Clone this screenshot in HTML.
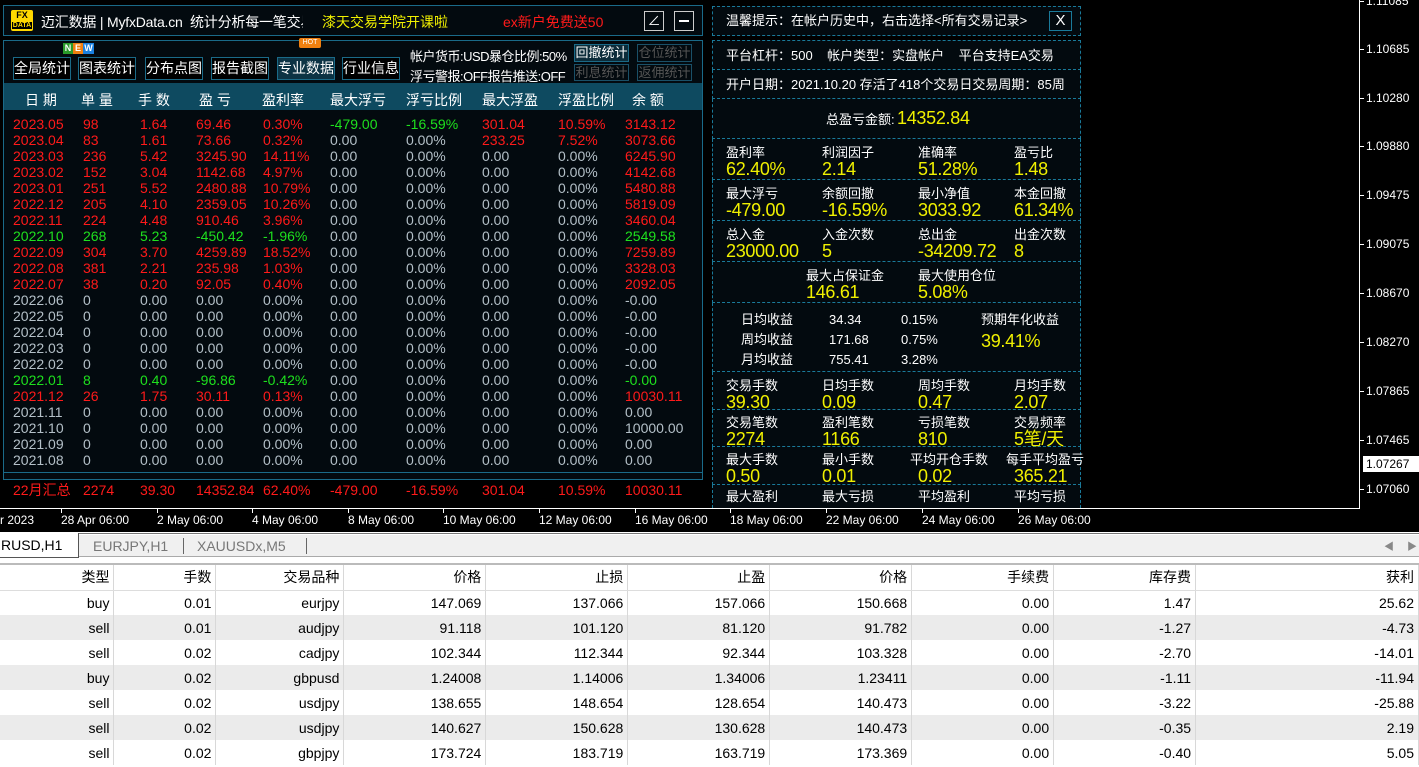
<!DOCTYPE html>
<html><head><meta charset="utf-8">
<style>
*{margin:0;padding:0;box-sizing:border-box}
body{width:1419px;height:767px;overflow:hidden;background:#000;position:relative;font-family:"Liberation Sans","Noto Sans CJK SC",sans-serif;color:#fff}
.a{position:absolute;white-space:nowrap}
.box{position:absolute;border:1px solid #1a6a88;background:#030a0f}
.btn{position:absolute;top:57px;height:23px;border:1px solid #1a6a88;background:#000;color:#fff;font-size:14px;line-height:21px;text-align:center}
.row{position:absolute;left:0;height:16px;font-size:14px;line-height:16px;width:700px}
.row span{position:absolute;white-space:nowrap}
.r{color:#ff1a1a}.g{color:#1ee01e}.w{color:#b4c0c8}
.c1{left:13px}.c2{left:83px}.c3{left:140px}.c4{left:196px}.c5{left:263px}.c6{left:330px}.c7{left:406px}.c8{left:482px}.c9{left:558px}.c10{left:625px}
.hd span{position:absolute;top:90px;font-size:14px;color:#fff;white-space:nowrap}
.rb{position:absolute;left:712px;width:369px;border:1px dashed #1a7a9a;border-top:none;background:#030a0f}
.lb{position:absolute;font-size:13px;line-height:15px;color:#fff;white-space:nowrap}
.v{position:absolute;font-size:18px;color:#f0f000;white-space:nowrap;line-height:18px;letter-spacing:-0.3px}
.pl{position:absolute;left:1366px;font-size:12px;color:#fff}
.tk{position:absolute;left:1359px;width:5px;height:1px;background:#fff}
.tl{position:absolute;top:513px;font-size:12px;color:#fff;white-space:nowrap}
.tt{position:absolute;top:508px;width:1px;height:5px;background:#fff}
table{position:absolute;left:0;top:565px;border-collapse:collapse;font-size:14px;color:#000}
td{height:25px;text-align:right;padding-right:4px;border-right:1px solid #d8d8d8;white-space:nowrap}
tr.e td{background:#ebebeb}
tr.h td{height:25px;border-bottom:1px solid #ddd}
</style></head><body>

<!-- top bar -->
<div class="box" style="left:3px;top:5px;width:700px;height:31px"></div>
<div class="a" style="left:11px;top:10px;width:22px;height:21px;background:#ffd800;border-radius:2px;color:#000;font-size:9px;font-weight:bold;line-height:9px;text-align:center;padding-top:1px">FX<br><span style="font-size:7px;background:#000;color:#ffd800;padding:0 1px">DATA</span></div>
<div class="a" style="left:41px;top:12px;font-size:14px;letter-spacing:-0.2px">迈汇数据 | MyfxData.cn&nbsp; 统计分析每一笔交易</div>
<div class="a" style="left:303px;top:8px;width:17px;height:26px;background:#030a0f"></div>
<div class="a" style="left:322px;top:12px;font-size:14px;color:#f0f000">漆天交易学院开课啦</div>
<div class="a" style="left:503px;top:12px;font-size:14px;color:#ff1a1a">ex新户免费送50</div>
<div class="a" style="left:644px;top:11px;width:20px;height:20px;border:1px solid #ccc;font-size:13px;text-align:center;line-height:18px">∠</div>
<div class="a" style="left:674px;top:11px;width:20px;height:20px;border:1px solid #ccc"><div style="position:absolute;left:4px;top:8px;width:10px;height:2px;background:#fff"></div></div>

<!-- main box -->
<div class="box" style="left:3px;top:40px;width:700px;height:440px"></div>
<div class="a" style="left:63px;top:43px;width:32px;height:11px;font-size:9px;font-weight:bold;line-height:11px">
<span style="display:inline-block;width:10px;background:#2a9a2a;text-align:center">N</span><span style="display:inline-block;width:10px;background:#f08010;text-align:center">E</span><span style="display:inline-block;width:11px;background:#1a80e0;text-align:center">W</span></div>
<div class="a" style="left:299px;top:38px;width:22px;height:10px;background:#f08010;font-size:7px;text-align:center;line-height:10px;border-radius:2px">HOT</div>
<div class="btn" style="left:13px;width:58px">全局统计</div>
<div class="btn" style="left:78px;width:58px">图表统计</div>
<div class="btn" style="left:145px;width:58px">分布点图</div>
<div class="btn" style="left:211px;width:58px">报告截图</div>
<div class="btn" style="left:277px;width:58px;background:#0c3344">专业数据</div>
<div class="btn" style="left:342px;width:58px">行业信息</div>
<div class="a" style="left:410px;top:46px;font-size:13px;letter-spacing:-0.5px">帐户货币:USD暴仓比例:50%</div>
<div class="a" style="left:410px;top:66px;font-size:13px;letter-spacing:-0.5px">浮亏警报:OFF报告推送:OFF</div>
<div class="a" style="left:574px;top:44px;width:55px;height:18px;border:1px solid #1a6a88;background:#0c2c3a;font-size:13px;line-height:16px;text-align:center">回撤统计</div>
<div class="a" style="left:637px;top:44px;width:55px;height:18px;border:1px solid #1a5068;font-size:13px;line-height:16px;text-align:center;color:#555">仓位统计</div>
<div class="a" style="left:574px;top:64px;width:55px;height:17px;border:1px solid #1a5068;font-size:13px;line-height:16px;text-align:center;color:#555">利息统计</div>
<div class="a" style="left:637px;top:64px;width:55px;height:17px;border:1px solid #1a5068;font-size:13px;line-height:16px;text-align:center;color:#555">返佣统计</div>

<div class="a" style="left:4px;top:83px;width:698px;height:27px;background:#0e4a60"></div>
<div class="hd">
<span style="left:25px">日 期</span><span style="left:81px">单 量</span><span style="left:138px">手 数</span><span style="left:199px">盈 亏</span><span style="left:262px">盈利率</span><span style="left:330px">最大浮亏</span><span style="left:406px">浮亏比例</span><span style="left:482px">最大浮盈</span><span style="left:558px">浮盈比例</span><span style="left:632px">余 额</span>
</div>

<div class="row r" style="top:116px"><span class="c1">2023.05</span><span class="c2">98</span><span class="c3">1.64</span><span class="c4">69.46</span><span class="c5">0.30%</span><span class="c6 g">-479.00</span><span class="c7 g">-16.59%</span><span class="c8">301.04</span><span class="c9">10.59%</span><span class="c10">3143.12</span></div>
<div class="row r" style="top:132px"><span class="c1">2023.04</span><span class="c2">83</span><span class="c3">1.61</span><span class="c4">73.66</span><span class="c5">0.32%</span><span class="c6 w">0.00</span><span class="c7 w">0.00%</span><span class="c8">233.25</span><span class="c9">7.52%</span><span class="c10">3073.66</span></div>
<div class="row r" style="top:148px"><span class="c1">2023.03</span><span class="c2">236</span><span class="c3">5.42</span><span class="c4">3245.90</span><span class="c5">14.11%</span><span class="c6 w">0.00</span><span class="c7 w">0.00%</span><span class="c8 w">0.00</span><span class="c9 w">0.00%</span><span class="c10">6245.90</span></div>
<div class="row r" style="top:164px"><span class="c1">2023.02</span><span class="c2">152</span><span class="c3">3.04</span><span class="c4">1142.68</span><span class="c5">4.97%</span><span class="c6 w">0.00</span><span class="c7 w">0.00%</span><span class="c8 w">0.00</span><span class="c9 w">0.00%</span><span class="c10">4142.68</span></div>
<div class="row r" style="top:180px"><span class="c1">2023.01</span><span class="c2">251</span><span class="c3">5.52</span><span class="c4">2480.88</span><span class="c5">10.79%</span><span class="c6 w">0.00</span><span class="c7 w">0.00%</span><span class="c8 w">0.00</span><span class="c9 w">0.00%</span><span class="c10">5480.88</span></div>
<div class="row r" style="top:196px"><span class="c1">2022.12</span><span class="c2">205</span><span class="c3">4.10</span><span class="c4">2359.05</span><span class="c5">10.26%</span><span class="c6 w">0.00</span><span class="c7 w">0.00%</span><span class="c8 w">0.00</span><span class="c9 w">0.00%</span><span class="c10">5819.09</span></div>
<div class="row r" style="top:212px"><span class="c1">2022.11</span><span class="c2">224</span><span class="c3">4.48</span><span class="c4">910.46</span><span class="c5">3.96%</span><span class="c6 w">0.00</span><span class="c7 w">0.00%</span><span class="c8 w">0.00</span><span class="c9 w">0.00%</span><span class="c10">3460.04</span></div>
<div class="row g" style="top:228px"><span class="c1">2022.10</span><span class="c2">268</span><span class="c3">5.23</span><span class="c4">-450.42</span><span class="c5">-1.96%</span><span class="c6 w">0.00</span><span class="c7 w">0.00%</span><span class="c8 w">0.00</span><span class="c9 w">0.00%</span><span class="c10">2549.58</span></div>
<div class="row r" style="top:244px"><span class="c1">2022.09</span><span class="c2">304</span><span class="c3">3.70</span><span class="c4">4259.89</span><span class="c5">18.52%</span><span class="c6 w">0.00</span><span class="c7 w">0.00%</span><span class="c8 w">0.00</span><span class="c9 w">0.00%</span><span class="c10">7259.89</span></div>
<div class="row r" style="top:260px"><span class="c1">2022.08</span><span class="c2">381</span><span class="c3">2.21</span><span class="c4">235.98</span><span class="c5">1.03%</span><span class="c6 w">0.00</span><span class="c7 w">0.00%</span><span class="c8 w">0.00</span><span class="c9 w">0.00%</span><span class="c10">3328.03</span></div>
<div class="row r" style="top:276px"><span class="c1">2022.07</span><span class="c2">38</span><span class="c3">0.20</span><span class="c4">92.05</span><span class="c5">0.40%</span><span class="c6 w">0.00</span><span class="c7 w">0.00%</span><span class="c8 w">0.00</span><span class="c9 w">0.00%</span><span class="c10">2092.05</span></div>
<div class="row w" style="top:292px"><span class="c1">2022.06</span><span class="c2">0</span><span class="c3">0.00</span><span class="c4">0.00</span><span class="c5">0.00%</span><span class="c6">0.00</span><span class="c7">0.00%</span><span class="c8">0.00</span><span class="c9">0.00%</span><span class="c10">-0.00</span></div>
<div class="row w" style="top:308px"><span class="c1">2022.05</span><span class="c2">0</span><span class="c3">0.00</span><span class="c4">0.00</span><span class="c5">0.00%</span><span class="c6">0.00</span><span class="c7">0.00%</span><span class="c8">0.00</span><span class="c9">0.00%</span><span class="c10">-0.00</span></div>
<div class="row w" style="top:324px"><span class="c1">2022.04</span><span class="c2">0</span><span class="c3">0.00</span><span class="c4">0.00</span><span class="c5">0.00%</span><span class="c6">0.00</span><span class="c7">0.00%</span><span class="c8">0.00</span><span class="c9">0.00%</span><span class="c10">-0.00</span></div>
<div class="row w" style="top:340px"><span class="c1">2022.03</span><span class="c2">0</span><span class="c3">0.00</span><span class="c4">0.00</span><span class="c5">0.00%</span><span class="c6">0.00</span><span class="c7">0.00%</span><span class="c8">0.00</span><span class="c9">0.00%</span><span class="c10">-0.00</span></div>
<div class="row w" style="top:356px"><span class="c1">2022.02</span><span class="c2">0</span><span class="c3">0.00</span><span class="c4">0.00</span><span class="c5">0.00%</span><span class="c6">0.00</span><span class="c7">0.00%</span><span class="c8">0.00</span><span class="c9">0.00%</span><span class="c10">-0.00</span></div>
<div class="row g" style="top:372px"><span class="c1">2022.01</span><span class="c2">8</span><span class="c3">0.40</span><span class="c4">-96.86</span><span class="c5">-0.42%</span><span class="c6 w">0.00</span><span class="c7 w">0.00%</span><span class="c8 w">0.00</span><span class="c9 w">0.00%</span><span class="c10">-0.00</span></div>
<div class="row r" style="top:388px"><span class="c1">2021.12</span><span class="c2">26</span><span class="c3">1.75</span><span class="c4">30.11</span><span class="c5">0.13%</span><span class="c6 w">0.00</span><span class="c7 w">0.00%</span><span class="c8 w">0.00</span><span class="c9 w">0.00%</span><span class="c10">10030.11</span></div>
<div class="row w" style="top:404px"><span class="c1">2021.11</span><span class="c2">0</span><span class="c3">0.00</span><span class="c4">0.00</span><span class="c5">0.00%</span><span class="c6">0.00</span><span class="c7">0.00%</span><span class="c8">0.00</span><span class="c9">0.00%</span><span class="c10">0.00</span></div>
<div class="row w" style="top:420px"><span class="c1">2021.10</span><span class="c2">0</span><span class="c3">0.00</span><span class="c4">0.00</span><span class="c5">0.00%</span><span class="c6">0.00</span><span class="c7">0.00%</span><span class="c8">0.00</span><span class="c9">0.00%</span><span class="c10">10000.00</span></div>
<div class="row w" style="top:436px"><span class="c1">2021.09</span><span class="c2">0</span><span class="c3">0.00</span><span class="c4">0.00</span><span class="c5">0.00%</span><span class="c6">0.00</span><span class="c7">0.00%</span><span class="c8">0.00</span><span class="c9">0.00%</span><span class="c10">0.00</span></div>
<div class="row w" style="top:452px"><span class="c1">2021.08</span><span class="c2">0</span><span class="c3">0.00</span><span class="c4">0.00</span><span class="c5">0.00%</span><span class="c6">0.00</span><span class="c7">0.00%</span><span class="c8">0.00</span><span class="c9">0.00%</span><span class="c10">0.00</span></div>
<div class="a" style="left:4px;top:472px;width:698px;height:1px;background:#1a6a88"></div>
<div class="row r" style="top:482px"><span class="c1">22月汇总</span><span class="c2">2274</span><span class="c3">39.30</span><span class="c4">14352.84</span><span class="c5">62.40%</span><span class="c6">-479.00</span><span class="c7">-16.59%</span><span class="c8">301.04</span><span class="c9">10.59%</span><span class="c10">10030.11</span></div>

<!-- right panel -->
<div class="rb" style="top:6px;height:30px;border-top:1px dashed #1a7a9a"></div>
<div class="lb" style="left:726px;top:13px">温馨提示：在帐户历史中，右击选择&lt;所有交易记录&gt;</div>
<div class="a" style="left:1049px;top:11px;width:23px;height:20px;border:1px solid #1a7a9a;font-size:15px;text-align:center;line-height:18px">X</div>
<div class="rb" style="top:40px;height:30px;border-top:1px dashed #1a7a9a"></div>
<div class="lb" style="left:726px;top:48px">平台杠杆：500 &nbsp;&nbsp; 帐户类型：实盘帐户 &nbsp;&nbsp; 平台支持EA交易</div>
<div class="rb" style="top:70px;height:29px"></div>
<div class="lb" style="left:726px;top:77px">开户日期：2021.10.20 存活了418个交易日交易周期：85周</div>
<div class="rb" style="top:99px;height:40px"></div>
<div class="lb" style="left:826px;top:112px">总盈亏金额:</div><div class="v" style="left:897px;top:109px">14352.84</div>
<div class="rb" style="top:139px;height:41px"></div>
<div class="rb" style="top:180px;height:41px"></div>
<div class="rb" style="top:221px;height:41px"></div>
<div class="rb" style="top:262px;height:41px"></div>
<div class="lb" style="left:726px;top:145px">盈利率</div><div class="v" style="left:726px;top:160px">62.40%</div>
<div class="lb" style="left:822px;top:145px">利润因子</div><div class="v" style="left:822px;top:160px">2.14</div>
<div class="lb" style="left:918px;top:145px">准确率</div><div class="v" style="left:918px;top:160px">51.28%</div>
<div class="lb" style="left:1014px;top:145px">盈亏比</div><div class="v" style="left:1014px;top:160px">1.48</div>
<div class="lb" style="left:726px;top:186px">最大浮亏</div><div class="v" style="left:726px;top:201px">-479.00</div>
<div class="lb" style="left:822px;top:186px">余额回撤</div><div class="v" style="left:822px;top:201px">-16.59%</div>
<div class="lb" style="left:918px;top:186px">最小净值</div><div class="v" style="left:918px;top:201px">3033.92</div>
<div class="lb" style="left:1014px;top:186px">本金回撤</div><div class="v" style="left:1014px;top:201px">61.34%</div>
<div class="lb" style="left:726px;top:227px">总入金</div><div class="v" style="left:726px;top:242px">23000.00</div>
<div class="lb" style="left:822px;top:227px">入金次数</div><div class="v" style="left:822px;top:242px">5</div>
<div class="lb" style="left:918px;top:227px">总出金</div><div class="v" style="left:918px;top:242px">-34209.72</div>
<div class="lb" style="left:1014px;top:227px">出金次数</div><div class="v" style="left:1014px;top:242px">8</div>
<div class="lb" style="left:806px;top:268px">最大占保证金</div><div class="v" style="left:806px;top:283px">146.61</div>
<div class="lb" style="left:918px;top:268px">最大使用仓位</div><div class="v" style="left:918px;top:283px">5.08%</div>
<div class="rb" style="top:303px;height:69px"></div>
<div class="lb" style="left:741px;top:312px">日均收益</div><div class="lb" style="left:829px;top:312px">34.34</div><div class="lb" style="left:901px;top:312px">0.15%</div>
<div class="lb" style="left:741px;top:332px">周均收益</div><div class="lb" style="left:829px;top:332px">171.68</div><div class="lb" style="left:901px;top:332px">0.75%</div>
<div class="lb" style="left:741px;top:352px">月均收益</div><div class="lb" style="left:829px;top:352px">755.41</div><div class="lb" style="left:901px;top:352px">3.28%</div>
<div class="lb" style="left:981px;top:312px">预期年化收益</div><div class="v" style="left:981px;top:332px">39.41%</div>
<div class="rb" style="top:372px;height:38px"></div>
<div class="rb" style="top:410px;height:37px"></div>
<div class="rb" style="top:447px;height:38px"></div>
<div class="rb" style="top:485px;height:23px;border-bottom:none"></div>
<div class="lb" style="left:726px;top:378px">交易手数</div><div class="v" style="left:726px;top:393px">39.30</div>
<div class="lb" style="left:822px;top:378px">日均手数</div><div class="v" style="left:822px;top:393px">0.09</div>
<div class="lb" style="left:918px;top:378px">周均手数</div><div class="v" style="left:918px;top:393px">0.47</div>
<div class="lb" style="left:1014px;top:378px">月均手数</div><div class="v" style="left:1014px;top:393px">2.07</div>
<div class="lb" style="left:726px;top:415px">交易笔数</div><div class="v" style="left:726px;top:430px">2274</div>
<div class="lb" style="left:822px;top:415px">盈利笔数</div><div class="v" style="left:822px;top:430px">1166</div>
<div class="lb" style="left:918px;top:415px">亏损笔数</div><div class="v" style="left:918px;top:430px">810</div>
<div class="lb" style="left:1014px;top:415px">交易频率</div><div class="v" style="left:1014px;top:430px">5笔/天</div>
<div class="lb" style="left:726px;top:452px">最大手数</div><div class="v" style="left:726px;top:467px">0.50</div>
<div class="lb" style="left:822px;top:452px">最小手数</div><div class="v" style="left:822px;top:467px">0.01</div>
<div class="lb" style="left:910px;top:452px">平均开仓手数</div><div class="v" style="left:918px;top:467px">0.02</div>
<div class="lb" style="left:1006px;top:452px">每手平均盈亏</div><div class="v" style="left:1014px;top:467px">365.21</div>
<div class="lb" style="left:726px;top:489px">最大盈利</div>
<div class="lb" style="left:822px;top:489px">最大亏损</div>
<div class="lb" style="left:918px;top:489px">平均盈利</div>
<div class="lb" style="left:1014px;top:489px">平均亏损</div>

<!-- chart axes -->
<div class="a" style="left:1359px;top:0;width:1px;height:509px;background:#fff"></div>
<div class="a" style="left:0;top:508px;width:1360px;height:1px;background:#fff"></div>
<div class="pl" style="top:-6px">1.11085</div><div class="tk" style="top:1px"></div>
<div class="pl" style="top:42px">1.10685</div><div class="tk" style="top:49px"></div>
<div class="pl" style="top:91px">1.10280</div><div class="tk" style="top:98px"></div>
<div class="pl" style="top:139px">1.09880</div><div class="tk" style="top:146px"></div>
<div class="pl" style="top:188px">1.09475</div><div class="tk" style="top:195px"></div>
<div class="pl" style="top:237px">1.09075</div><div class="tk" style="top:244px"></div>
<div class="pl" style="top:286px">1.08670</div><div class="tk" style="top:293px"></div>
<div class="pl" style="top:335px">1.08270</div><div class="tk" style="top:342px"></div>
<div class="pl" style="top:384px">1.07865</div><div class="tk" style="top:391px"></div>
<div class="pl" style="top:433px">1.07465</div><div class="tk" style="top:440px"></div>
<div class="a" style="left:1363px;top:456px;width:56px;height:16px;background:#fff;color:#000;font-size:12px;padding-left:3px;line-height:16px">1.07267</div>
<div class="pl" style="top:482px">1.07060</div><div class="tk" style="top:489px"></div>
<div class="tl" style="left:0">r 2023</div>
<div class="tt" style="left:61px"></div><div class="tl" style="left:61px">28 Apr 06:00</div>
<div class="tt" style="left:157px"></div><div class="tl" style="left:157px">2 May 06:00</div>
<div class="tt" style="left:252px"></div><div class="tl" style="left:252px">4 May 06:00</div>
<div class="tt" style="left:348px"></div><div class="tl" style="left:348px">8 May 06:00</div>
<div class="tt" style="left:443px"></div><div class="tl" style="left:443px">10 May 06:00</div>
<div class="tt" style="left:539px"></div><div class="tl" style="left:539px">12 May 06:00</div>
<div class="tt" style="left:635px"></div><div class="tl" style="left:635px">16 May 06:00</div>
<div class="tt" style="left:730px"></div><div class="tl" style="left:730px">18 May 06:00</div>
<div class="tt" style="left:826px"></div><div class="tl" style="left:826px">22 May 06:00</div>
<div class="tt" style="left:922px"></div><div class="tl" style="left:922px">24 May 06:00</div>
<div class="tt" style="left:1018px"></div><div class="tl" style="left:1018px">26 May 06:00</div>

<!-- bottom area -->
<div class="a" style="left:0;top:532px;width:1419px;height:235px;background:#fff"></div>
<div class="a" style="left:0;top:533px;width:1419px;height:1px;background:#777"></div>
<div class="a" style="left:0;top:535px;width:1419px;height:22px;background:#f0f0f0;border-bottom:1px solid #aaa"></div>
<div class="a" style="left:0;top:533px;width:79px;height:25px;background:#fff;border-right:1px solid #555;border-bottom:1px solid #555;font-size:14px;color:#000;line-height:24px;padding-left:1px">RUSD,H1</div>
<div class="a" style="left:93px;top:538px;font-size:14px;color:#777">EURJPY,H1</div>
<div class="a" style="left:183px;top:538px;width:1px;height:16px;background:#666"></div>
<div class="a" style="left:197px;top:538px;font-size:14px;color:#777">XAUUSDx,M5</div>
<div class="a" style="left:306px;top:538px;width:1px;height:16px;background:#666"></div>
<div class="a" style="left:1384px;top:538px;font-size:10px;color:#888">◀</div>
<div class="a" style="left:1407px;top:538px;font-size:10px;color:#888">▶</div>
<div class="a" style="left:0;top:563px;width:1419px;height:2px;background:#bbb"></div>
<table>
<colgroup><col style="width:114px"><col style="width:102px"><col style="width:128px"><col style="width:142px"><col style="width:142px"><col style="width:142px"><col style="width:142px"><col style="width:142px"><col style="width:142px"><col style="width:223px"></colgroup>
<tr class="h"><td>类型</td><td>手数</td><td>交易品种</td><td>价格</td><td>止损</td><td>止盈</td><td>价格</td><td>手续费</td><td>库存费</td><td>获利</td></tr>
<tr><td>buy</td><td>0.01</td><td>eurjpy</td><td>147.069</td><td>137.066</td><td>157.066</td><td>150.668</td><td>0.00</td><td>1.47</td><td>25.62</td></tr>
<tr class="e"><td>sell</td><td>0.01</td><td>audjpy</td><td>91.118</td><td>101.120</td><td>81.120</td><td>91.782</td><td>0.00</td><td>-1.27</td><td>-4.73</td></tr>
<tr><td>sell</td><td>0.02</td><td>cadjpy</td><td>102.344</td><td>112.344</td><td>92.344</td><td>103.328</td><td>0.00</td><td>-2.70</td><td>-14.01</td></tr>
<tr class="e"><td>buy</td><td>0.02</td><td>gbpusd</td><td>1.24008</td><td>1.14006</td><td>1.34006</td><td>1.23411</td><td>0.00</td><td>-1.11</td><td>-11.94</td></tr>
<tr><td>sell</td><td>0.02</td><td>usdjpy</td><td>138.655</td><td>148.654</td><td>128.654</td><td>140.473</td><td>0.00</td><td>-3.22</td><td>-25.88</td></tr>
<tr class="e"><td>sell</td><td>0.02</td><td>usdjpy</td><td>140.627</td><td>150.628</td><td>130.628</td><td>140.473</td><td>0.00</td><td>-0.35</td><td>2.19</td></tr>
<tr><td>sell</td><td>0.02</td><td>gbpjpy</td><td>173.724</td><td>183.719</td><td>163.719</td><td>173.369</td><td>0.00</td><td>-0.40</td><td>5.05</td></tr>
</table>
</body></html>
